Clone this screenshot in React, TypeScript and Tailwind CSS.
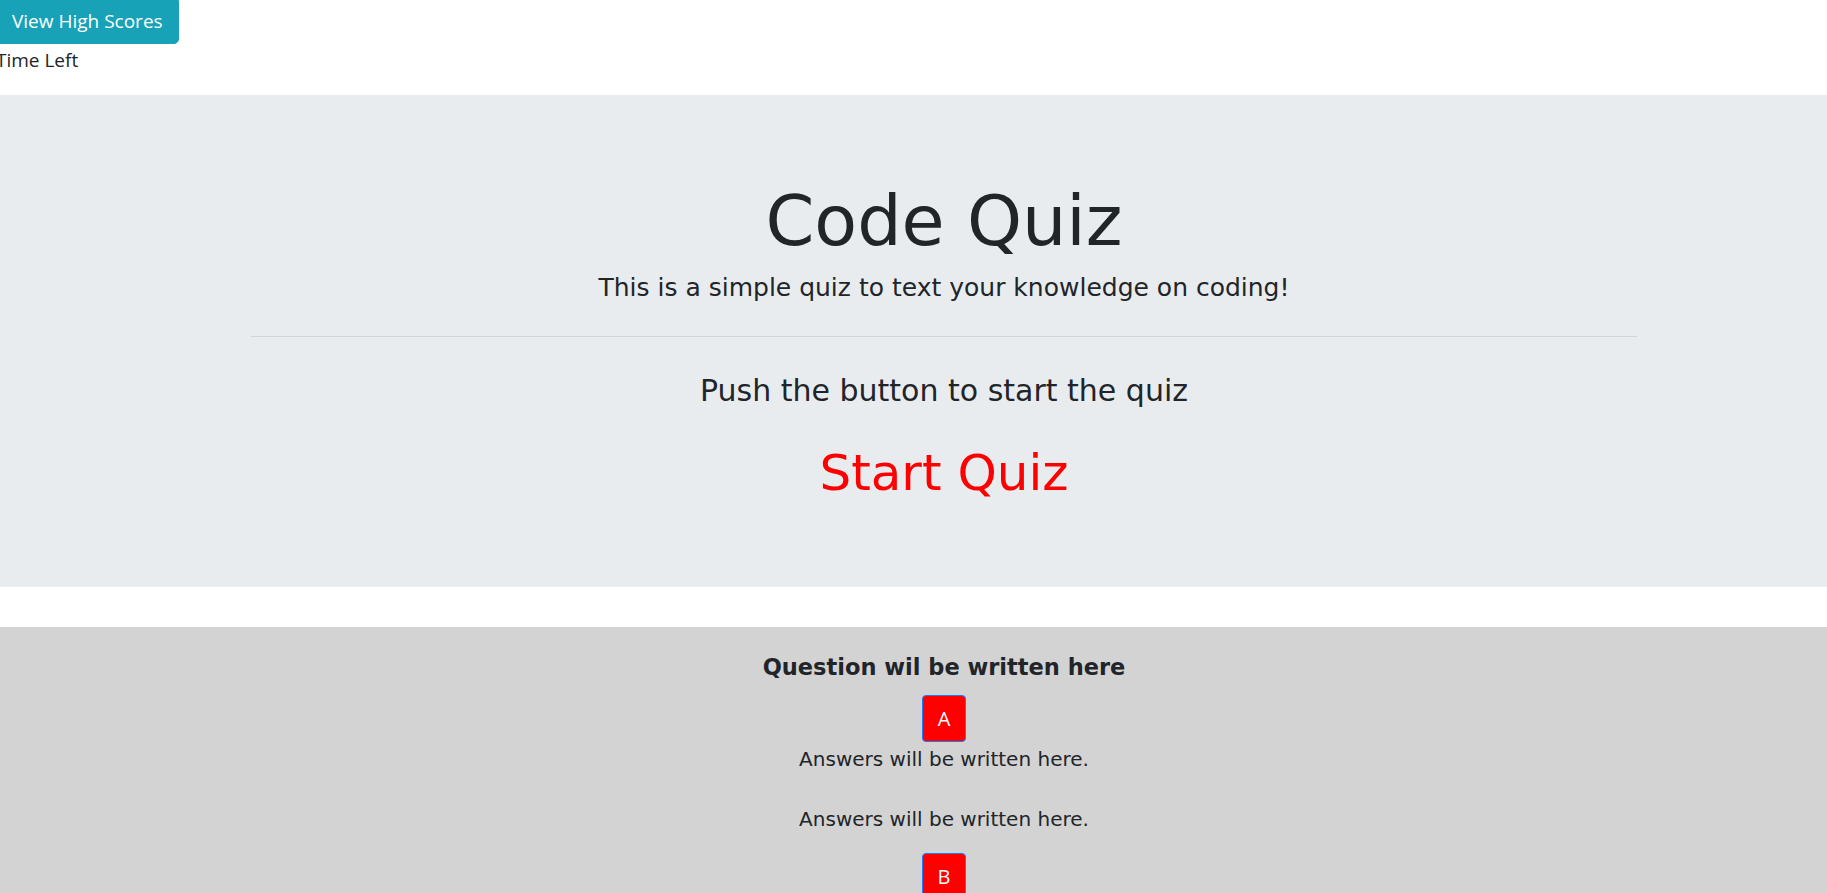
import React from 'react'

const answers = ['A', 'B', 'C', 'D']

const AnswerButton = ({ label }: { label: string }) => (
  <button className="px-[15px] py-[7.5px] leading-[30px] text-[20px] font-['Open_Sans',sans-serif] text-white bg-[#ff0000] border border-[#1a7dff] rounded-[4px]">
    {label}
  </button>
)

const App = () => {
  return (
    <div className="min-h-screen bg-white text-[#212529] font-['DejaVu_Sans',sans-serif] overflow-hidden">
      <header className="-ml-[4px] -mt-[3px] flex flex-col items-start font-['Open_Sans',sans-serif]">
        <button className="px-[15px] py-[7.5px] leading-[30px] text-[19px] text-white bg-[#17a2b8] border border-[#17a2b8] rounded-[5px]">
          View High Scores
        </button>
        <span className="text-[19px] leading-[32px]">Time Left</span>
      </header>

      <section className="mt-[19px] bg-[#e9ecef] pt-[84px] pb-[84px]">
        <div className="ml-[251px] w-[1386px] flex flex-col items-center text-center">
          <h1 className="text-[70px] leading-[85px] font-normal">Code Quiz</h1>
          <p className="mt-[9px] text-[25px] leading-[30px]">
            This is a simple quiz to text your knowledge on coding!
          </p>
          <hr className="mt-[33px] w-full border-0 border-t border-[#d2d4d7]" />
          <p className="mt-[36px] text-[30px] leading-[36px]">Push the button to start the quiz</p>
          <button className="mt-[34px] text-[50px] leading-[60px] text-[#ff0000]">Start Quiz</button>
        </div>
      </section>

      <section className="mt-[40px] bg-[#d3d3d3] pt-[27px] pb-[40px] min-h-[400px]">
        <div className="ml-[251px] w-[1386px] flex flex-col items-center text-center">
          <h5 className="text-[22.5px] leading-[27px] font-bold">Question wil be written here</h5>
          <div className="mt-[14px]">
            <AnswerButton label={answers[0]} />
          </div>
          <p className="mt-[2px] text-[20px] leading-[30px]">Answers will be written here.</p>
          <p className="mt-[30px] text-[20px] leading-[30px]">Answers will be written here.</p>
          <div className="mt-[19px]">
            <AnswerButton label={answers[1]} />
          </div>
          <p className="mt-[2px] text-[20px] leading-[30px]">Answers will be written here.</p>
          <div className="mt-[19px]">
            <AnswerButton label={answers[2]} />
          </div>
          <p className="mt-[2px] text-[20px] leading-[30px]">Answers will be written here.</p>
          <div className="mt-[19px]">
            <AnswerButton label={answers[3]} />
          </div>
        </div>
      </section>
    </div>
  )
}

export default App
